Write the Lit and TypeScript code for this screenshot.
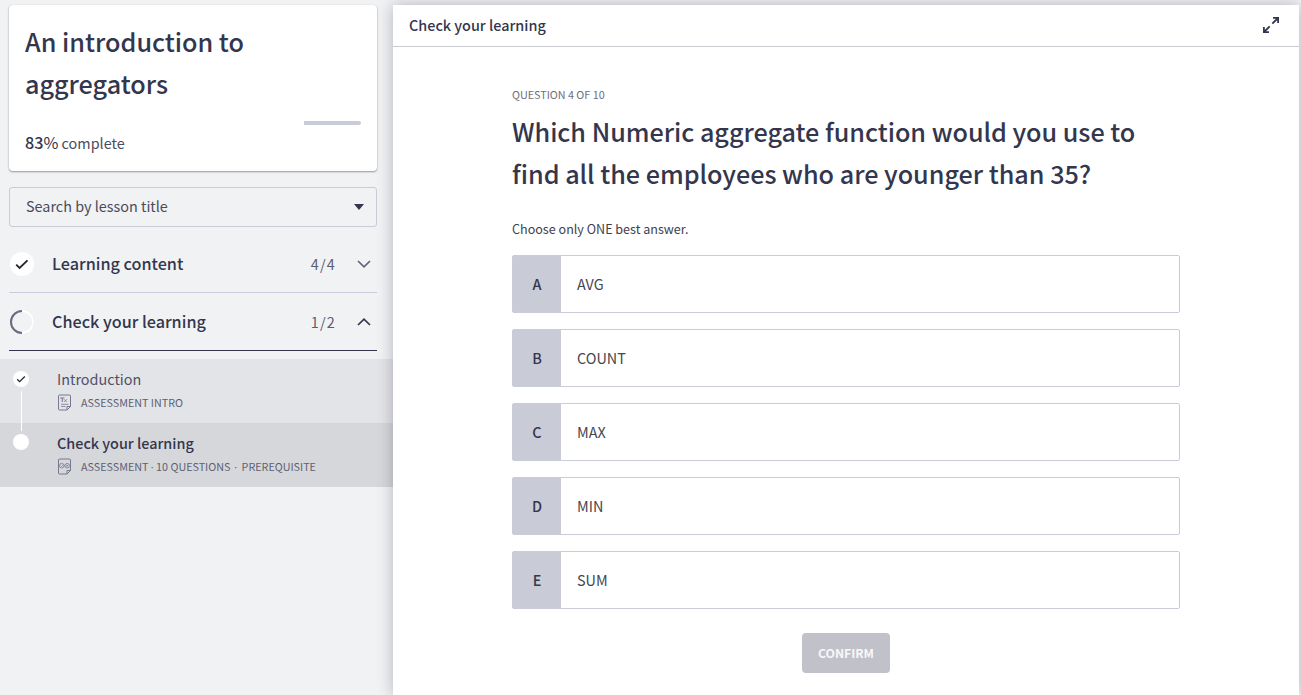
import { LitElement, html, css, svg } from "lit";
import { customElement } from "lit/decorators.js";

const OPTIONS = ["AVG", "COUNT", "MAX", "MIN", "SUM"];

@customElement("app-root")
export class AppRoot extends LitElement {
  static styles = css`
    :host {
      display: flex;
      height: 695px;
      overflow: hidden;
      background: #f1f2f4;
      color: #33364d;
      font-family: "Noto Sans CJK SC", "Open Sans", sans-serif;
      font-size: 14.4px;
      line-height: 24px;
    }
    * { box-sizing: border-box; }
    svg { display: block; flex: none; }
    .side { width: 393px; flex: none; padding-top: 5px; }
    .card {
      height: 166px;
      margin: 0 16px 0 9px;
      padding: 15px 16px 0;
      background: #fff;
      border-radius: 4px;
      box-shadow: 0 1px 2px rgba(40, 42, 60, 0.45), 0 0 1px rgba(40, 42, 60, 0.15);
    }
    h1, h2 { margin: 0; font-size: 25.2px; line-height: 42px; font-weight: 500; }
    .bar { height: 4px; margin-top: 17px; display: flex; justify-content: flex-end; }
    .rest { width: 57px; background: #c9cbd6; border-radius: 0 2px 2px 0; }
    .done { margin-top: 5px; padding-top: 1px; color: #4a4c5c; }
    .done b { font-weight: 500; font-size: 16.2px; line-height: 1; color: #33364d; }
    .done b span { font-weight: 400; }
    .search {
      height: 40px;
      margin: 16px 16px 8px 9px;
      padding: 0 12px 0 16px;
      border: 1px solid #c9cbd6;
      border-radius: 3px;
      display: flex;
      align-items: center;
      justify-content: space-between;
      color: #4a4c5c;
    }
    .search span { padding-bottom: 2px; }
    .section {
      height: 58px;
      margin: 0 16px 0 9px;
      border-bottom: 1px solid #c9cbdb;
      display: flex;
      align-items: center;
    }
    .section.open { border-color: #33364d; }
    .name { margin-left: 18px; padding-bottom: 2px; font-size: 16.2px; font-weight: 500; flex: 1; }
    .count { letter-spacing: 1.2px; margin-right: 21px; color: #5b5d70; }
    .chev { margin-right: 6px; }
    .lessons { margin-top: 8px; display: flex; background: #e3e4e8; position: relative; flex-direction: column; }
    .lesson { height: 64px; padding: 8px 0 0 13px; display: flex; gap: 28px; color: #4f5166; }
    .lesson.current { background: #d6d7db; color: #33364d; }
    .lesson.current .title { font-weight: 500; }
    .bullet { margin-top: 4px; }
    .link { position: absolute; left: 21px; top: 32px; width: 1px; height: 40px; background: #fff; }
    .meta { display: flex; align-items: flex-start; gap: 9px; font-size: 10.75px; color: #5d5f74; }
    .meta svg { margin-top: 3px; }
    .meta span { white-space: pre; }
    .meta i { font: 10.8px/1 "Open Sans", sans-serif; }
    .meta .wide { margin: 0 2px 0 1.5px; }
    .main {
      width: 906px;
      margin-top: 5px;
      background: #fff;
      box-shadow: 0 0 15px rgba(20, 22, 40, 0.28);
      position: relative;
    }
    .head {
      height: 42px;
      padding: 0 19px 2px 16px;
      border-bottom: 1px solid #c9cad0;
      display: flex;
      align-items: center;
      justify-content: space-between;
      font-weight: 500;
    }
    .body { width: 668px; margin-left: 119px; padding-top: 36px; }
    .step { font-size: 10.75px; color: #6c6e7c; }
    h2 { margin-top: 3px; letter-spacing: -0.015px; }
    .hint { margin-top: 23px; font-size: 12.57px; color: #3d3f50; }
    .options { margin-top: 14px; display: grid; gap: 16px; }
    .option { height: 58px; border: 1px solid #c9cbd6; border-radius: 2px; display: flex; line-height: 56px; }
    .key { width: 48px; background: #c9cbd6; text-align: center; font-weight: 500; }
    .text { padding-left: 16px; color: #44464f; }
    .confirm {
      display: block;
      width: 88px;
      height: 40px;
      margin: 24px auto 0;
      padding: 0;
      border: 0;
      border-radius: 4px;
      background: #c1c2c9;
      color: #f7f7f9;
      font: 700 12.2px/40px "Noto Sans CJK SC", sans-serif;
    }
  `;

  private chevron(up: boolean) {
    return html`<svg class="chev" width="14" height="8" viewBox="0 0 14 8" fill="none" stroke=${up ? "#33364d" : "#62647a"} stroke-width="1.7">
      <path d=${up ? "M1 7 7 1.2 13 7" : "M1 1 7 6.8 13 1"} /></svg>`;
  }

  private doc(kind: "text" | "quiz") {
    return html`<svg width="15" height="17" viewBox="0 0 15 17" fill="none" stroke="#777990" stroke-width="1">
      <path d="M10 16H2.5q-1 0-1-1v-13q0-1 1-1h10q1 0 1 1V12.5L10 16V12.5H13.5" />
      ${kind === "text"
        ? svg`<path d="M3.2 4H7.4M5.3 4V8" stroke-width="1.1" /><path d="M7.2 5.3 9.8 8M9.8 5.3 7.2 8M4 10.3H11.5M4 12.5H8.5" stroke-width=".8" />`
        : svg`<circle cx="4.7" cy="7.7" r="2.3" stroke-width=".8" /><circle cx="10.2" cy="7.7" r="2.3" stroke-width=".8" /><path d="M3.7 7.6 4.6 8.4 6.3 6.7M9.2 6.8 11.2 8.6M11.2 6.8 9.2 8.6M7 7.7H8" stroke-width=".7" />`}
    </svg>`;
  }

  render() {
    return html`
      <aside class="side">
        <div class="card">
          <h1>An introduction to<br />aggregators</h1>
          <div class="bar"><div class="rest"></div></div>
          <div class="done"><b>83<span>%</span></b> complete</div>
        </div>
        <div class="search">
          <span>Search by lesson title</span>
          <svg width="10" height="6" viewBox="0 0 10 6"><path d="M0 0H10L5 6Z" fill="#33364d" /></svg>
        </div>
        <div class="section">
          <svg width="25" height="24" viewBox="0 0 25 24"><circle cx="13" cy="12" r="12" fill="#fff" />
            <path d="M7.2 12.7 10.6 16 18.5 8.3" fill="none" stroke="#22242e" stroke-width="1.8" /></svg>
          <span class="name">Learning content</span>
          <span class="count">4/4</span>${this.chevron(false)}
        </div>
        <div class="section open">
          <svg width="25" height="24" viewBox="0 0 25 24" fill="none"><circle cx="13" cy="12" r="11.5" stroke="#d3d4d9" />
            <path d="M13 1A11 11 0 0 1 13 23" stroke="#fff" stroke-width="1.8" />
            <path d="M13 1A11 11 0 0 0 13 23" stroke="#696b80" stroke-width="2" /></svg>
          <span class="name">Check your learning</span>
          <span class="count">1/2</span>${this.chevron(true)}
        </div>
        <div class="lessons">
          <div class="lesson">
            <svg class="bullet" width="16" height="16" viewBox="0 0 16 16"><circle cx="8" cy="8" r="8" fill="#fff" />
              <path d="M4.2 8.3 6.6 10.6 11.8 5.5" fill="none" stroke="#22242e" stroke-width="1.2" /></svg>
            <div><div class="title">Introduction</div><div class="meta">${this.doc("text")}<span>ASSESSMENT INTRO</span></div></div>
          </div>
          <div class="lesson current">
            <svg class="bullet" width="16" height="16" viewBox="0 0 16 16" overflow="visible"><circle cx="8" cy="7" r="8" fill="#fff" /></svg>
            <div><div class="title">Check your learning</div><div class="meta">${this.doc("quiz")}<span>ASSESSMENT <i>·</i> 10 QUESTIONS <i class="wide">·</i> PREREQUISITE</span></div></div>
          </div>
          <div class="link"></div>
        </div>
      </aside>
      <main class="main">
        <header class="head">
          <span>Check your learning</span>
          <svg width="18" height="18" viewBox="0 0 18 18" fill="none" stroke="#33364d" stroke-width="1.8">
            <path d="M10.3 7.7 16 2M11 1.9H16.1V7M7.7 10.3 2 16M1.9 11V16.1H7" /></svg>
        </header>
        <div class="body">
          <div class="step">QUESTION 4 OF 10</div>
          <h2>Which Numeric aggregate function would you use to<br />find all the employees who are younger than 35?</h2>
          <div class="hint">Choose only ONE best answer.</div>
          <div class="options">
            ${OPTIONS.map((text, i) => html`<div class="option">
              <div class="key">${String.fromCharCode(65 + i)}</div><div class="text">${text}</div></div>`)}
          </div>
          <button class="confirm">CONFIRM</button>
        </div>
      </main>
    `;
  }
}
